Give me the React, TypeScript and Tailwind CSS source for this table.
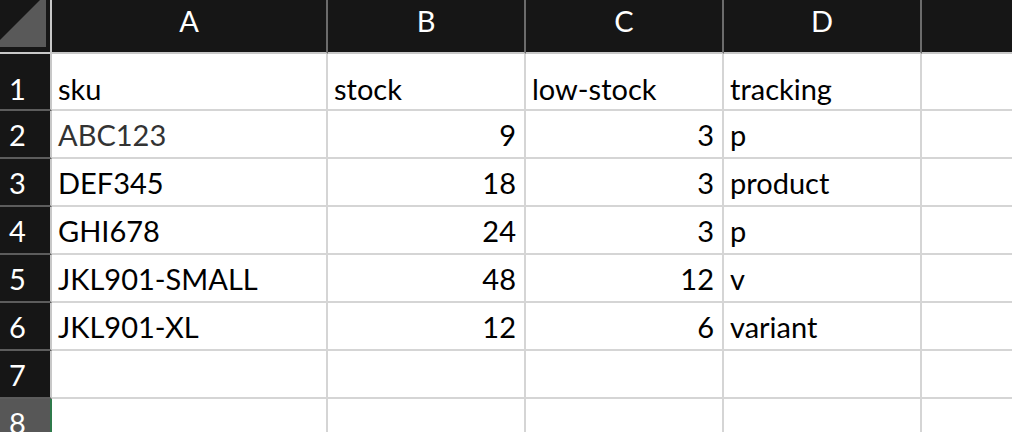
import React from "react";

type Row = {
  num: number;
  cells: [string, string, string, string];
  dim?: boolean;
};

const rows: Row[] = [
  { num: 1, cells: ["sku", "stock", "low-stock", "tracking"] },
  { num: 2, cells: ["ABC123", "9", "3", "p"], dim: true },
  { num: 3, cells: ["DEF345", "18", "3", "product"] },
  { num: 4, cells: ["GHI678", "24", "3", "p"] },
  { num: 5, cells: ["JKL901-SMALL", "48", "12", "v"] },
  { num: 6, cells: ["JKL901-XL", "12", "6", "variant"] },
  { num: 7, cells: ["", "", "", ""] },
  { num: 8, cells: ["", "", "", ""] },
];

const cols = ["A", "B", "C", "D", ""];

const isNum = (v: string) => v !== "" && !isNaN(Number(v));

const App: React.FC = () => {
  return (
    <div
      className="w-[1012px] h-[432px] overflow-hidden bg-white text-[29px] leading-[36px] text-black"
      style={{ fontFamily: "Lato, 'Open Sans', sans-serif" }}
    >
      <div className="grid grid-cols-[52px_276px_198px_198px_198px_1fr]">
        {/* corner */}
        <div className="h-[54px] bg-[#161616] border-r-2 border-b-2 border-[#c8c8c8]">
          <svg width="50" height="52" viewBox="0 0 50 52">
            <polygon points="0,40 40,0 46,0 46,47 0,47" fill="#595959" />
          </svg>
        </div>
        {cols.map((c, i) => (
          <div
            key={i}
            className={`h-[54px] bg-[#161616] border-b-2 border-b-[#c8c8c8] text-white text-center pt-[3px] ${
              i < 4 ? "border-r-2 border-r-[#6b6b6b]" : ""
            }`}
          >
            {c}
          </div>
        ))}

        {rows.map((row) => {
          const first = row.num === 1;
          const h = first ? "h-[57px] pt-[17px]" : "h-[48px] pt-[6px]";
          const selected = row.num === 8;
          return (
            <React.Fragment key={row.num}>
              <div
                className={`${h} pl-[9px] text-white border-b-2 border-b-[#5c5c5c] border-r-2 ${
                  selected
                    ? "bg-[#575757] border-r-[#2f7a4b]"
                    : "bg-[#161616] border-r-[#c8c8c8]"
                }`}
              >
                {row.num}
              </div>
              {row.cells.map((v, i) => (
                <div
                  key={i}
                  className={`${h} border-r-2 border-b-2 border-[#d5d5d5] whitespace-nowrap ${
                    isNum(v) ? "text-right pr-[8px]" : "pl-[6px]"
                  } ${row.dim && i === 0 ? "text-[#333333]" : ""}`}
                >
                  {v}
                </div>
              ))}
              <div className={`${h} border-b-2 border-[#d5d5d5]`} />
            </React.Fragment>
          );
        })}
      </div>
    </div>
  );
};

export default App;
